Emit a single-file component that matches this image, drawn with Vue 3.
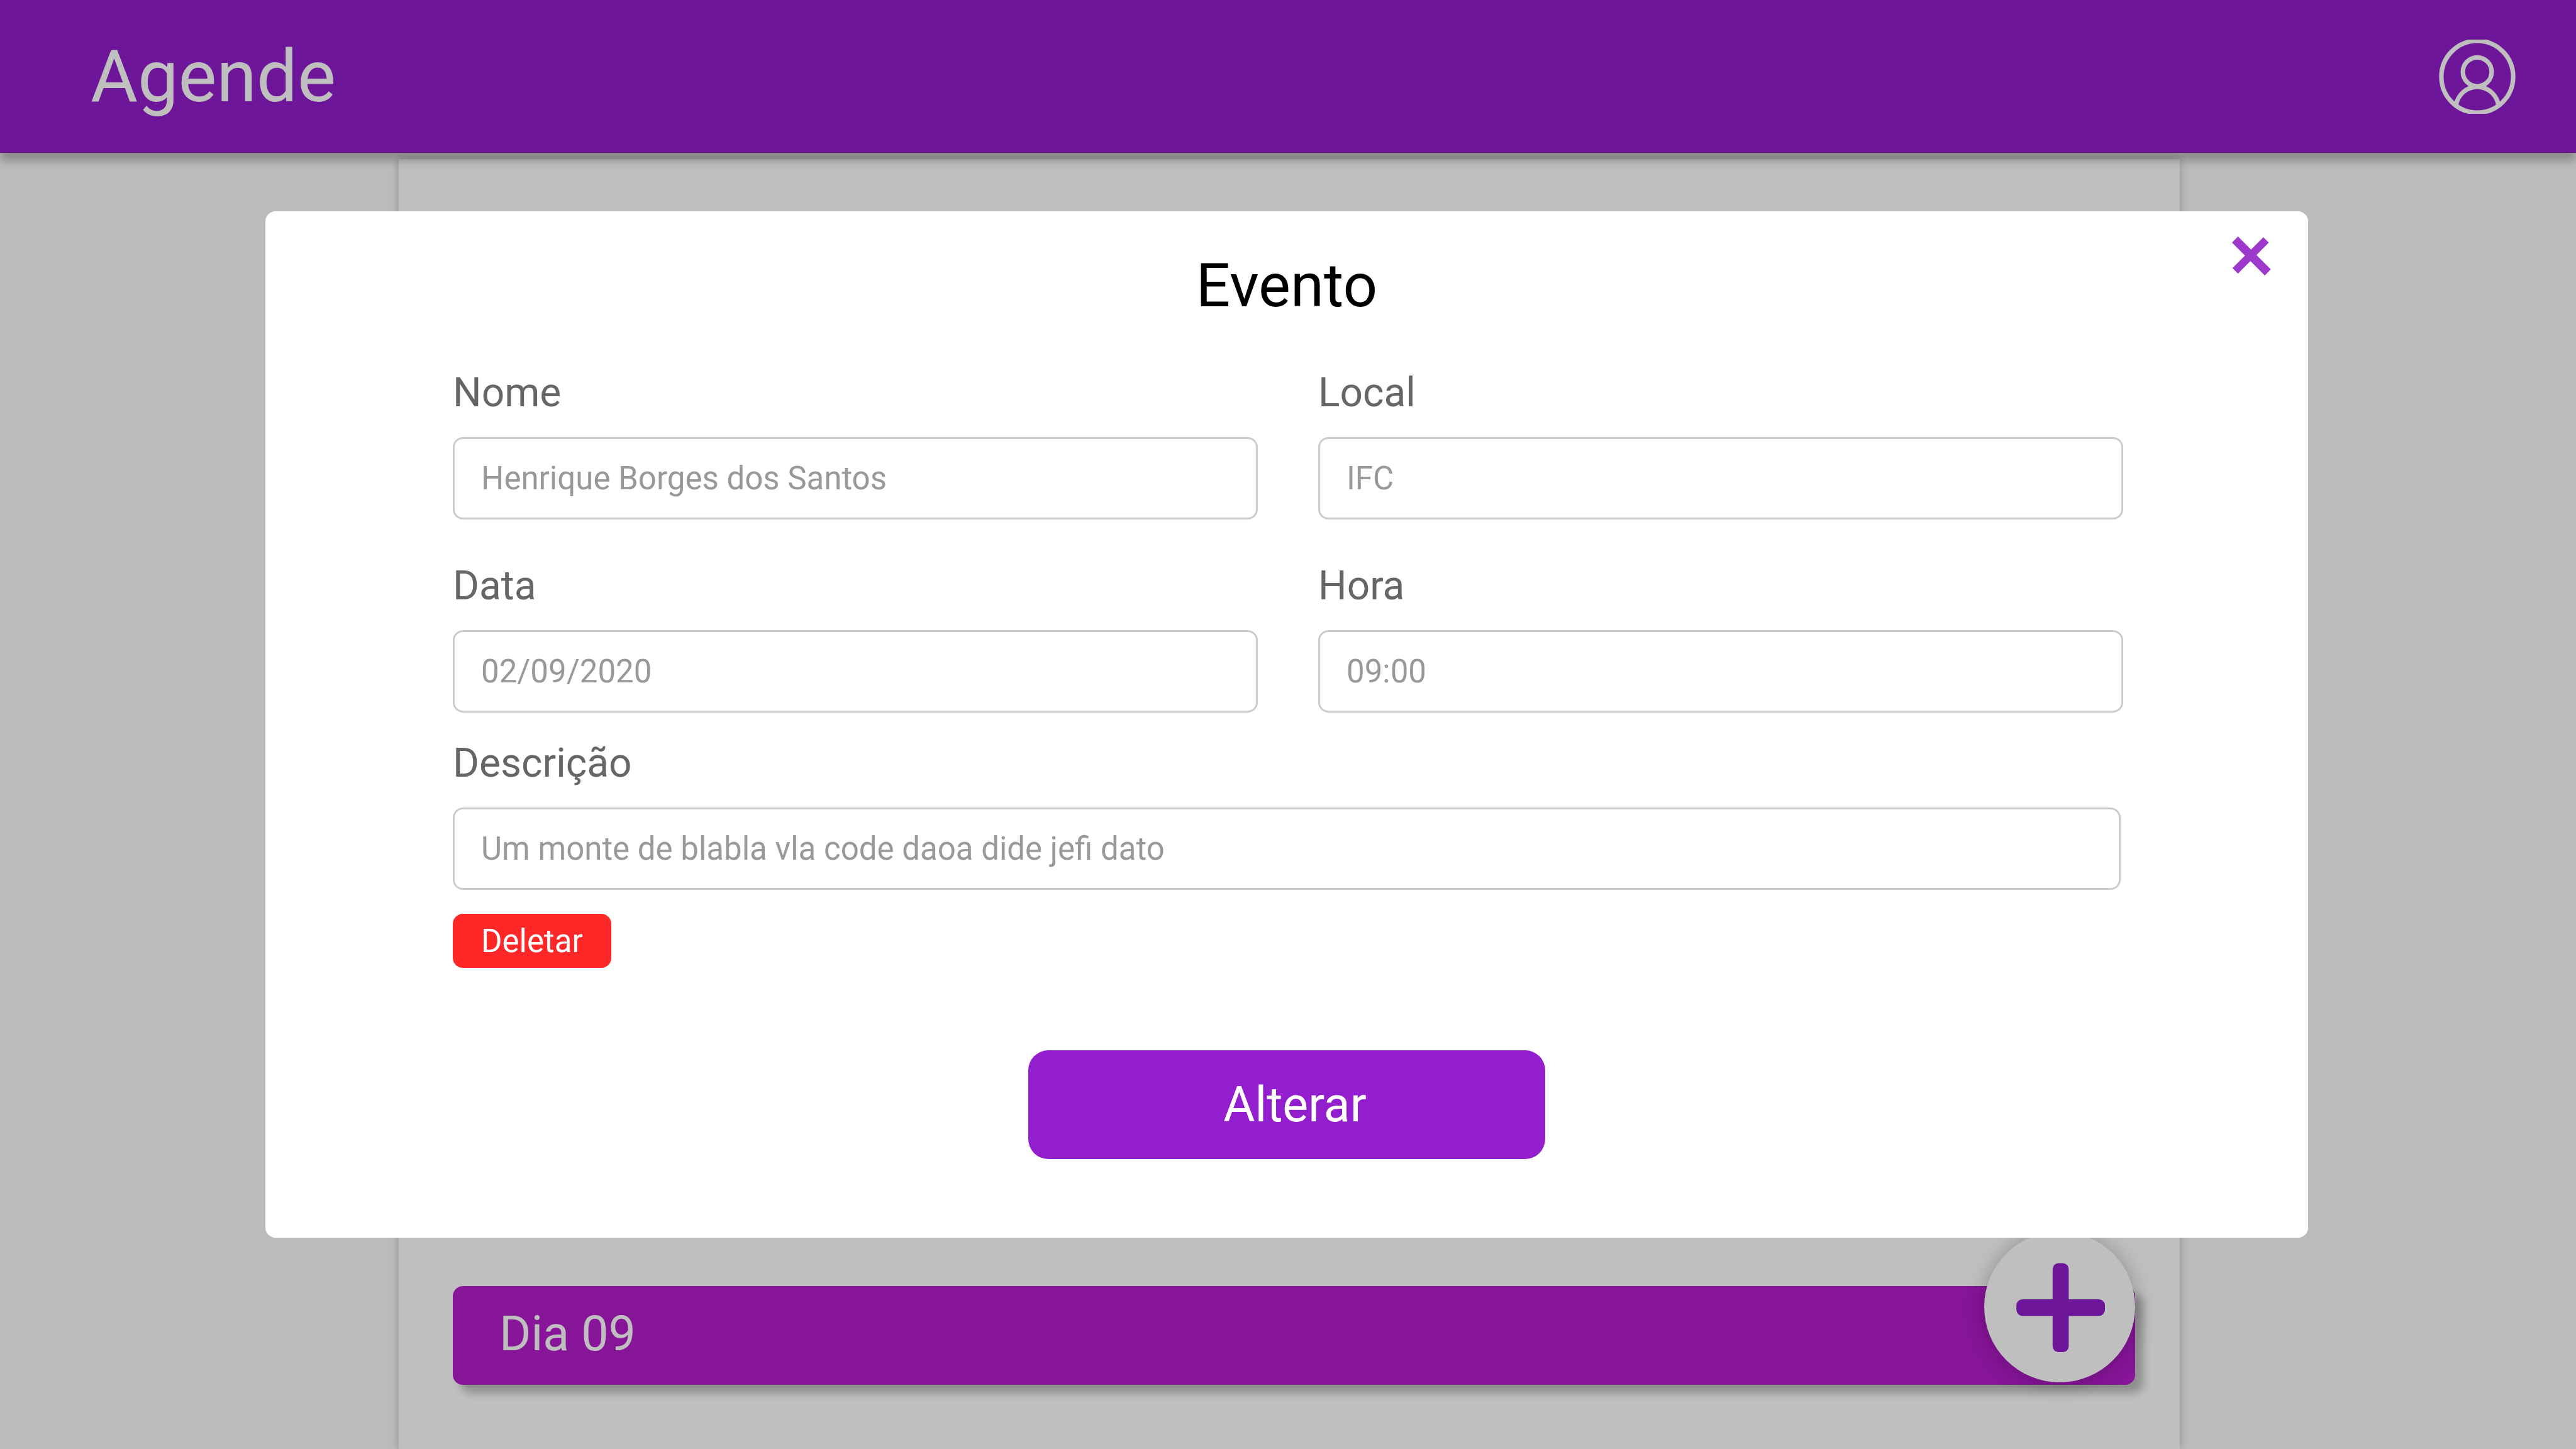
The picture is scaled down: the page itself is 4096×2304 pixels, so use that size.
<script setup>
import { reactive, ref } from 'vue'

const open = ref(true)

const form = reactive({
  nome: 'Henrique Borges dos Santos',
  local: 'IFC',
  data: '02/09/2020',
  hora: '09:00',
  descricao: 'Um monte de blabla vla code daoa dide jefi dato',
})

const rows = [
  [
    { id: 'nome', label: 'Nome' },
    { id: 'local', label: 'Local' },
  ],
  [
    { id: 'data', label: 'Data' },
    { id: 'hora', label: 'Hora' },
  ],
]
</script>

<template>
  <div class="page">
    <header class="topbar">
      <h1 class="brand">Agende</h1>
      <button class="profile" type="button" aria-label="Perfil">
        <svg viewBox="0 0 152 148" fill="none" stroke="currentColor" stroke-width="9">
          <circle cx="76" cy="74" r="71.6" />
          <circle cx="76" cy="64.2" r="28.7" />
          <path d="M33.8 131.6A42.5 42.5 0 0 1 118.2 131.6" />
        </svg>
      </button>
    </header>

    <main class="panel">
      <h2 class="day">Dia 09</h2>
      <button class="add" type="button" aria-label="Adicionar evento">
        <svg viewBox="0 0 300 300" fill="currentColor">
          <rect x="136" y="63" width="32" height="177" rx="12" />
          <rect x="64" y="135" width="176" height="33" rx="12" />
        </svg>
      </button>
    </main>

    <div v-if="open" class="overlay">
      <section class="modal" role="dialog" aria-modal="true" aria-labelledby="modal-title">
        <button class="close" type="button" aria-label="Fechar" @click="open = false">
          <svg viewBox="0 0 78 78" fill="currentColor">
            <polygon points="0,12.2 12,0 77.6,65.7 65.6,78" />
            <polygon points="62.7,1.6 73.7,12.2 12,74.2 1,63.2" />
          </svg>
        </button>
        <h2 id="modal-title" class="title">Evento</h2>
        <form class="form" @submit.prevent>
          <div class="rows">
            <div v-for="(row, i) in rows" :key="i" class="row">
              <div v-for="field in row" :key="field.id" class="field">
                <label :for="field.id">{{ field.label }}</label>
                <input :id="field.id" v-model="form[field.id]" type="text" />
              </div>
            </div>
          </div>
          <div class="field description">
            <label for="descricao">Descrição</label>
            <input id="descricao" v-model="form.descricao" type="text" />
          </div>
          <button class="delete" type="button">Deletar</button>
          <button class="submit" type="submit">Alterar</button>
        </form>
      </section>
    </div>
  </div>
</template>

<style>
body {
  margin: 0;
}
</style>

<style scoped>
.page {
  display: flex;
  flex-direction: column;
  min-height: 100vh;
  background: #fafafa;
  font-family: Roboto, "Liberation Sans", sans-serif;
}

.page *,
.page {
  box-sizing: border-box;
}

h1,
h2 {
  margin: 0;
  font-weight: 400;
}

button {
  padding: 0;
  border: 0;
  font-family: inherit;
  cursor: pointer;
}

svg {
  display: block;
  width: 100%;
  height: 100%;
}

.topbar {
  position: relative;
  z-index: 1;
  display: flex;
  align-items: center;
  justify-content: space-between;
  height: 243px;
  padding: 0 96px 0 144px;
  background: #921ecd;
  color: #fff;
  box-shadow: 0 13px 13px rgba(0, 0, 0, 0.25);
}

.brand {
  font-size: 115px;
  line-height: 136px;
}

.profile {
  width: 122px;
  height: 118px;
  background: none;
  color: #fff;
}

.panel {
  position: relative;
  flex: 1;
  display: flex;
  flex-direction: column;
  justify-content: flex-end;
  margin: 10px 630px 0 634px;
  padding: 0 71px 102px 86px;
  background: #fff;
  box-shadow: 0 0 13px rgba(0, 0, 0, 0.25);
}

.day {
  padding: 0 74px 4px;
  border-radius: 16px;
  background: #b31ccb;
  color: #fff;
  font-size: 77px;
  line-height: 153px;
  box-shadow: 13px 13px 13px rgba(0, 0, 0, 0.25);
}

.add {
  position: absolute;
  right: 71px;
  bottom: 106px;
  width: 240px;
  height: 240px;
  border-radius: 50%;
  background: #fff;
  color: #921ecd;
  box-shadow: 0 0 32px rgba(0, 0, 0, 0.25);
}

.overlay {
  position: fixed;
  inset: 0;
  z-index: 2;
  display: flex;
  align-items: flex-start;
  padding: 336px 426px 0 422px;
  background: rgba(0, 0, 0, 0.25);
}

.modal {
  position: relative;
  flex: 1;
  padding: 62px 298px 125px;
  border-radius: 16px;
  background: #fff;
}

.close {
  position: absolute;
  top: 40px;
  right: 59px;
  width: 62px;
  height: 62px;
  background: none;
  color: #9e3acb;
}

.title {
  margin-bottom: 77px;
  color: #000;
  font-size: 96px;
  line-height: 112px;
  text-align: center;
}

.form {
  display: flex;
  flex-direction: column;
}

.rows {
  display: flex;
  flex-direction: column;
  gap: 68px;
  margin-right: -4px;
}

.row {
  display: grid;
  grid-template-columns: 1fr 1fr;
  gap: 96px;
}

.field {
  display: flex;
  flex-direction: column;
  gap: 32px;
}

.description {
  margin-top: 43px;
}

label {
  color: #666;
  font-size: 64px;
  line-height: 76px;
}

input {
  width: 100%;
  height: 131px;
  padding: 0 42px;
  border: 3px solid #ccc;
  border-radius: 16px;
  background: #fff;
  color: #999;
  font-family: inherit;
  font-size: 51px;
}

.delete {
  align-self: flex-start;
  height: 86px;
  margin-top: 38px;
  padding: 0 45px;
  border-radius: 16px;
  background: #ff2828;
  color: #fff;
  font-size: 51px;
}

.submit {
  align-self: center;
  width: 822px;
  height: 173px;
  margin-top: 131px;
  padding-left: 26px;
  border-radius: 32px;
  background: #921ecd;
  color: #fff;
  font-size: 77px;
}
</style>
